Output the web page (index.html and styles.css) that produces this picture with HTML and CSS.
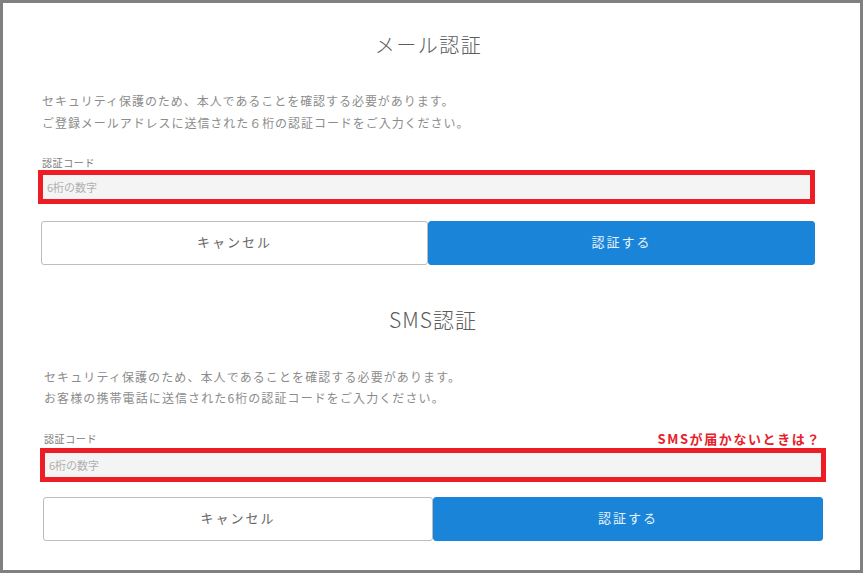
FILE: index.html
```html
<!DOCTYPE html>
<html lang="ja">
<head>
<meta charset="utf-8">
<title>認証</title>
<link rel="stylesheet" href="styles.css">
</head>
<body>
<div class="frame">
  <section class="auth auth--mail">
    <h1 class="auth__title">メール認証</h1>
    <p class="auth__desc">セキュリティ保護のため、本人であることを確認する必要があります。<br>ご登録メールアドレスに送信された６桁の認証コードをご入力ください。</p>
    <div class="auth__labelrow"><span class="auth__label">認証コード</span></div>
    <div class="auth__mark"><div class="auth__input">6桁の数字</div></div>
    <div class="auth__buttons">
      <button class="btn btn--cancel">キャンセル</button>
      <button class="btn btn--primary">認証する</button>
    </div>
  </section>
  <section class="auth auth--sms">
    <h1 class="auth__title">SMS認証</h1>
    <p class="auth__desc">セキュリティ保護のため、本人であることを確認する必要があります。<br>お客様の携帯電話に送信された6桁の認証コードをご入力ください。</p>
    <div class="auth__labelrow"><span class="auth__label">認証コード</span><span class="auth__help">SMSが届かないときは？</span></div>
    <div class="auth__mark"><div class="auth__input">6桁の数字</div></div>
    <div class="auth__buttons">
      <button class="btn btn--cancel">キャンセル</button>
      <button class="btn btn--primary">認証する</button>
    </div>
  </section>
</div>
</body>
</html>
```
FILE: styles.css
```css
* { box-sizing: border-box; }
html, body { margin: 0; padding: 0; background: #ffffff; }
body {
  font-family: "Noto Sans CJK JP", "Noto Sans", sans-serif;
  width: 863px;
  height: 573px;
  overflow: hidden;
}
.frame {
  width: 863px;
  height: 573px;
  border: 3px solid #808080;
  background: #ffffff;
  padding-top: 28px;
}
.auth { display: flex; flex-direction: column; }
.auth--mail { margin-left: 35px; width: 777px; }
.auth--sms { margin-left: 37px; width: 786px; margin-top: 39px; }

.auth__title {
  margin: 0;
  font-weight: 300;
  color: #5c5c5c;
  text-align: center;
  font-size: 20px;
  line-height: 28px;
  letter-spacing: 1.5px;
}
.auth--mail .auth__title { padding-left: 4px; }
.auth--sms .auth__title { font-size: 21px; line-height: 30px; letter-spacing: 1px; }

.auth__desc {
  margin: 31px 0 0 4px;
  font-size: 12px;
  line-height: 22px;
  letter-spacing: 0.95px;
  color: #8c8c8c;
}
.auth--sms .auth__desc { margin: 32px 0 0 4px; line-height: 21px; letter-spacing: 1.1px; }

.auth__labelrow {
  display: flex;
  justify-content: space-between;
  align-items: center;
  margin: 22px 0 0 4px;
  height: 14px;
}
.auth--sms .auth__labelrow { margin: 23px 0 1px 4px; height: 16px; padding-right: 5px; }
.auth__label {
  font-size: 10px;
  line-height: 14px;
  letter-spacing: 0.6px;
  color: #7a7a7a;
}
.auth__help {
  font-size: 13px;
  font-weight: 700;
  line-height: 16px;
  letter-spacing: 1.6px;
  color: #e8202a;
}

.auth__mark {
  border: 5px solid #ee1c25;
  height: 34px;
  background: #f4f4f4;
}
.auth__input {
  height: 24px;
  line-height: 24px;
  padding-left: 4px;
  font-size: 11px;
  color: #b0b0b0;
}

.auth__buttons {
  display: flex;
  margin: 17px 0 0 3px;
  height: 44px;
}
.auth--mail .auth__buttons { width: 774px; }
.auth--sms .auth__buttons { margin: 15px 0 0 3px; width: 780px; }
.btn {
  flex: 1 1 0;
  height: 44px;
  margin: 0;
  padding: 0 0 4px;
  font-family: inherit;
  font-size: 13px;
  letter-spacing: 2px;
  border-radius: 3px;
  cursor: pointer;
}
.btn--cancel {
  background: #ffffff;
  border: 1px solid #bdbdbd;
  color: #666666;
}
.btn--primary {
  background: #1a84d9;
  border: 1px solid #1a84d9;
  color: #e6f2fc;
}
```
